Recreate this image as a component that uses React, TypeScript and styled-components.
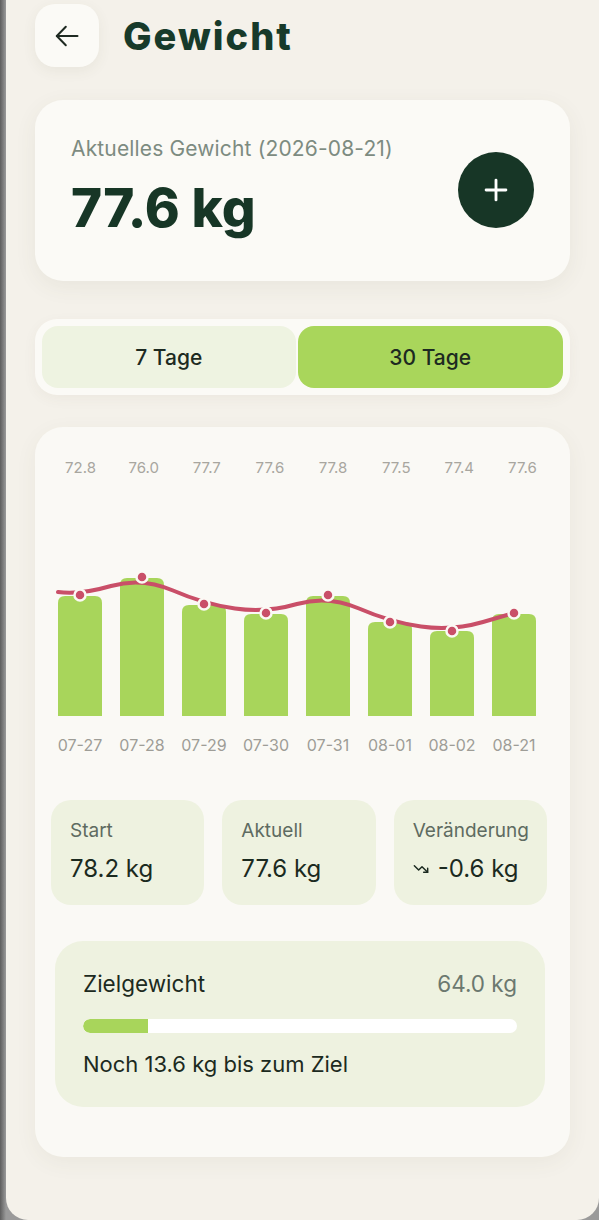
import React from "react";
import styled, { createGlobalStyle } from "styled-components";
import { Plus, TrendingDown } from "lucide-react";

const values = ["72.8", "76.0", "77.7", "77.6", "77.8", "77.5", "77.4", "77.6"];
const dates = ["07-27", "07-28", "07-29", "07-30", "07-31", "08-01", "08-02", "08-21"];
// bar tops / dot heights in chart pixels (chart is 496 x 239)
const barTops = [119, 101, 128, 137, 119, 145, 154, 137];
const dotYs = [118, 100, 127, 136, 118, 145, 154, 136];

const CHART_W = 496;
const CHART_H = 239;
const STEP = CHART_W / 8;
const BAR_W = 44;

const barPath = (x: number, top: number) => {
  const r = 7;
  return `M${x} ${CHART_H} L${x} ${top + r} Q${x} ${top} ${x + r} ${top} L${x + BAR_W - r} ${top} Q${x + BAR_W} ${top} ${x + BAR_W} ${top + r} L${x + BAR_W} ${CHART_H} Z`;
};

const linePath = () => {
  const pts: [number, number][] = [[9, 115]];
  dotYs.forEach((y, i) => pts.push([STEP / 2 + i * STEP, y]));
  let d = `M${pts[0][0]} ${pts[0][1]}`;
  for (let k = 1; k < pts.length - 1; k++) {
    const mx = (pts[k][0] + pts[k + 1][0]) / 2;
    const my = (pts[k][1] + pts[k + 1][1]) / 2;
    d += ` Q${pts[k][0]} ${pts[k][1]} ${mx} ${my}`;
  }
  const last = pts[pts.length - 1];
  d += ` L${last[0]} ${last[1]}`;
  return d;
};

export default () => {
  return (
    <>
      <Global />
      <Screen>
        <Header>
          <BackButton>
            <svg width="24" height="22" viewBox="0 0 24 22" fill="none" stroke="currentColor" strokeWidth="2" strokeLinecap="round" strokeLinejoin="round">
              <path d="M22.5 11H1.8" />
              <path d="M10.8 1.8 1.8 11l9 9.2" />
            </svg>
          </BackButton>
          <Title>Gewicht</Title>
        </Header>

        <SummaryCard>
          <div>
            <SummaryLabel>Aktuelles Gewicht (2026-08-21)</SummaryLabel>
            <SummaryValue>77.6 kg</SummaryValue>
          </div>
          <AddButton>
            <Plus size={34} strokeWidth={2} />
          </AddButton>
        </SummaryCard>

        <Segment>
          <SegmentButton>7 Tage</SegmentButton>
          <SegmentButton active>30 Tage</SegmentButton>
        </Segment>

        <ChartCard>
          <ValueRow>
            {values.map((v, i) => (
              <span key={i}>{v}</span>
            ))}
          </ValueRow>
          <ChartArea>
            <svg width={CHART_W} height={CHART_H} viewBox={`0 0 ${CHART_W} ${CHART_H}`} style={{ display: "block" }}>
              {barTops.map((t, i) => (
                <path key={i} d={barPath(STEP / 2 + i * STEP - BAR_W / 2, t)} fill="#a8d55b" />
              ))}
              <path d={linePath()} fill="none" stroke="#c94f68" strokeWidth={4} strokeLinecap="round" />
              {dotYs.map((y, i) => (
                <circle key={i} cx={STEP / 2 + i * STEP} cy={y} r={5.5} fill="#c94f68" stroke="#fbf9f4" strokeWidth={2.5} />
              ))}
            </svg>
            <DateRow>
              {dates.map((d) => (
                <span key={d}>{d}</span>
              ))}
            </DateRow>
          </ChartArea>

          <StatsRow>
            <StatCard>
              <StatLabel>Start</StatLabel>
              <StatValue>78.2 kg</StatValue>
            </StatCard>
            <StatCard>
              <StatLabel>Aktuell</StatLabel>
              <StatValue>77.6 kg</StatValue>
            </StatCard>
            <StatCard>
              <StatLabel>Veränderung</StatLabel>
              <StatValue>
                <TrendingDown size={16} strokeWidth={2.2} />
                -0.6 kg
              </StatValue>
            </StatCard>
          </StatsRow>

          <GoalCard>
            <GoalHead>
              <span>Zielgewicht</span>
              <GoalTarget>64.0 kg</GoalTarget>
            </GoalHead>
            <Track>
              <Fill style={{ width: "15%" }} />
            </Track>
            <GoalText>Noch 13.6 kg bis zum Ziel</GoalText>
          </GoalCard>
        </ChartCard>
      </Screen>
    </>
  );
};

//! Styled
const Global = createGlobalStyle`
  * { margin: 0; padding: 0; box-sizing: border-box; }
  body {
    background: linear-gradient(90deg, #5d5d5d, #9a9a9a 6px);
    font-family: Inter, "Noto Sans", sans-serif;
    color: #1d2a21;
  }
`;

const Screen = styled.div`
  margin-left: 6px;
  min-height: 1220px;
  background: #f4f1ea;
  border-radius: 0 0 22px 22px;
  padding: 4px 29px 0 29px;
`;

//? header
const Header = styled.header`
  display: flex;
  align-items: center;
  gap: 24px;
  height: 63px;
`;
const BackButton = styled.button`
  width: 64px;
  height: 63px;
  border: none;
  border-radius: 20px;
  background: #fbfaf6;
  color: #1f2a22;
  display: flex;
  align-items: center;
  justify-content: center;
  box-shadow: 0 4px 14px rgba(90, 80, 50, 0.07);
`;
const Title = styled.h1`
  font-size: 38px;
  font-weight: 800;
  color: #173a2a;
  letter-spacing: 2px;
`;

//? summary
const SummaryCard = styled.section`
  margin-top: 33px;
  height: 181px;
  border-radius: 28px;
  background: #fbfaf6;
  box-shadow: 0 6px 22px rgba(90, 80, 50, 0.07);
  padding: 36px 36px 0 36px;
  display: flex;
  justify-content: space-between;
  align-items: flex-start;
`;
const SummaryLabel = styled.div`
  font-size: 21px;
  line-height: 25px;
  color: #7d8b81;
  letter-spacing: 0.15px;
`;
const SummaryValue = styled.div`
  margin-top: 19px;
  font-size: 53px;
  line-height: 56px;
  font-weight: 800;
  color: #173626;
`;
const AddButton = styled.button`
  width: 76px;
  height: 76px;
  margin-top: 16px;
  border: none;
  border-radius: 50%;
  background: #173626;
  color: #fff;
  display: flex;
  align-items: center;
  justify-content: center;
`;

//? segment
const Segment = styled.div`
  margin-top: 38px;
  height: 76px;
  padding: 7px;
  border-radius: 22px;
  background: #fbfaf6;
  display: grid;
  grid-template-columns: 254fr 266fr;
  gap: 2px;
  box-shadow: 0 4px 14px rgba(90, 80, 50, 0.05);
`;
const SegmentButton = styled.button<{ active?: boolean }>`
  border: none;
  border-radius: 16px;
  background: ${(p) => (p.active ? "#a9d65b" : "#eef3e1")};
  font-family: inherit;
  font-size: 21px;
  font-weight: 500;
  color: #1d2a21;
`;

//? chart card
const ChartCard = styled.section`
  margin-top: 32px;
  border-radius: 28px;
  background: #faf9f5;
  box-shadow: 0 6px 22px rgba(90, 80, 50, 0.06);
  padding: 32px 16px 50px 14px;
`;
const ValueRow = styled.div`
  display: grid;
  grid-template-columns: repeat(8, 1fr);
  text-align: center;
  font-size: 15px;
  line-height: 18px;
  color: #a8a69f;
`;
const ChartArea = styled.div`
  width: ${CHART_W}px;
`;
const DateRow = styled.div`
  margin-top: 20px;
  display: grid;
  grid-template-columns: repeat(8, 1fr);
  text-align: center;
  font-size: 16px;
  line-height: 18px;
  color: #9e9d97;
`;

//? stats
const StatsRow = styled.div`
  margin: 46px 7px 0 2px;
  display: grid;
  grid-template-columns: repeat(3, 1fr);
  gap: 18px;
`;
const StatCard = styled.div`
  height: 105px;
  border-radius: 20px;
  background: #eef2e0;
  padding: 20px 16px 0 19px;
`;
const StatLabel = styled.div`
  font-size: 19px;
  line-height: 22px;
  color: #5e6b61;
`;
const StatValue = styled.div`
  margin-top: 13px;
  font-size: 24px;
  line-height: 28px;
  color: #1b2a20;
  display: flex;
  align-items: center;
  gap: 9px;
`;

//? goal
const GoalCard = styled.div`
  margin: 36px 9px 0 6px;
  height: 166px;
  border-radius: 28px;
  background: #eef2e0;
  padding: 30px 28px 0 28px;
`;
const GoalHead = styled.div`
  display: flex;
  justify-content: space-between;
  font-size: 22.5px;
  line-height: 26px;
  color: #1c2a20;
`;
const GoalTarget = styled.span`
  color: #6b786f;
`;
const Track = styled.div`
  margin-top: 22px;
  height: 14px;
  border-radius: 7px;
  background: #fff;
  overflow: hidden;
`;
const Fill = styled.div`
  height: 100%;
  border-radius: 7px 0 0 7px;
  background: #a8d55b;
`;
const GoalText = styled.div`
  margin-top: 18px;
  font-size: 22px;
  line-height: 26px;
  color: #1c2a20;
`;
